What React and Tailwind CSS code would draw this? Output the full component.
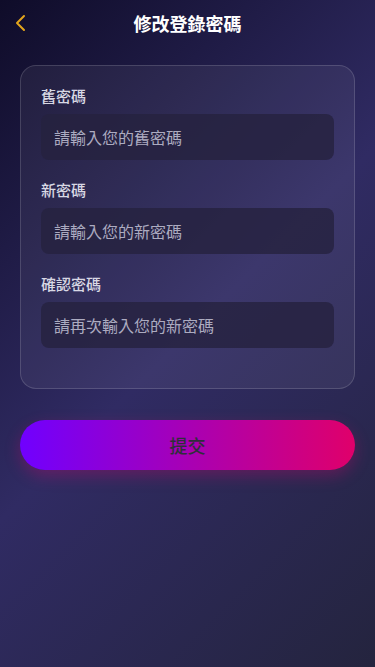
import React from "react";

const font = { fontFamily: '"Noto Sans CJK TC", "Noto Sans", sans-serif' };

function Field({ label, placeholder }) {
  return (
    <div className="mb-5">
      <div className="text-[15px] leading-5 font-medium text-[#d8d8e4] mb-2">{label}</div>
      <input
        type="password"
        placeholder={placeholder}
        className="w-full h-[46px] rounded-lg bg-[#26223f]/80 px-[13px] text-[16px] text-white placeholder:text-[#acabc0] outline-none"
      />
    </div>
  );
}

export default function App() {
  return (
    <div
      style={font}
      className="min-h-[667px] w-full bg-[linear-gradient(135deg,#0f0c29_0%,#302b63_50%,#24243e_100%)] flex flex-col"
    >
      <div className="relative h-[46px] flex items-center justify-center">
        <button className="absolute left-[12px] top-[12px] w-[16px] h-[22px] flex items-center justify-center">
          <svg width="12" height="18" viewBox="0 0 12 18" fill="none">
            <path d="M10 2 L3 9 L10 16" stroke="#e3a51c" strokeWidth="2" strokeLinecap="round" strokeLinejoin="round" />
          </svg>
        </button>
        <div className="text-[18px] font-bold text-white leading-6">修改登錄密碼</div>
      </div>

      <div className="mx-5 mt-[19px] rounded-2xl border border-white/15 bg-white/[0.06] px-5 pt-5 pb-5">
        <Field label="舊密碼" placeholder="請輸入您的舊密碼" />
        <Field label="新密碼" placeholder="請輸入您的新密碼" />
        <Field label="確認密碼" placeholder="請再次輸入您的新密碼" />
      </div>

      <div className="mx-5 mt-[31px]">
        <button className="w-full h-[50px] rounded-full bg-[linear-gradient(90deg,#7000ff,#e0006a)] shadow-[0_6px_16px_rgba(220,0,110,0.3)] text-[18px] font-medium text-[#2f2f3a]">
          提交
        </button>
      </div>
    </div>
  );
}
